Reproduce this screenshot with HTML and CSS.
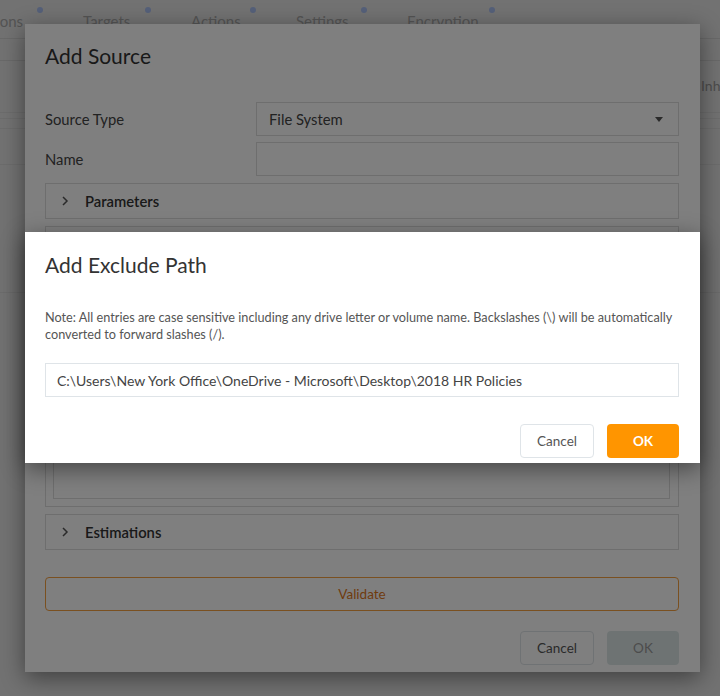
FILE: index.html
```html
<!DOCTYPE html>
<html>
<head>
<meta charset="utf-8">
<link rel="stylesheet" href="styles.css">
</head>
<body>
<div class="page">
  <div class="tabs">
    <div class="tab tab-first"><span>Options</span></div>
    <div class="tab"><span>Targets</span></div>
    <div class="tab"><span>Actions</span></div>
    <div class="tab"><span>Settings</span></div>
    <div class="tab"><span>Encryption</span></div>
  </div>
  <div class="toolbar"></div>
  <div class="row row-head"><span class="inhe">Inherited</span></div>
  <div class="row r1"></div>
  <div class="row r2"></div>
  <div class="row r3"></div>
  <div class="row r4"></div>
</div>

<div class="modal source">
  <h2 class="modal-title">Add Source</h2>
  <div class="form">
    <div class="field">
      <label class="label">Source Type</label>
      <div class="select"><span>File System</span><span class="caret"></span></div>
    </div>
    <div class="field">
      <label class="label">Name</label>
      <div class="input"></div>
    </div>
    <div class="panel">
      <svg class="chev" width="8" height="12" viewBox="0 0 8 12"><polyline points="2,2 6,6 2,10" fill="none" stroke="#555" stroke-width="1.5"/></svg>
      <span class="panel-title">Parameters</span>
    </div>
    <div class="panel panel-open">
      <div class="panel-head">
        <svg class="chev" width="8" height="12" viewBox="0 0 8 12"><polyline points="2,2 6,6 2,10" fill="none" stroke="#555" stroke-width="1.5"/></svg>
        <span class="panel-title">Exclude Paths</span>
      </div>
      <div class="inner-box"></div>
    </div>
    <div class="panel">
      <svg class="chev" width="8" height="12" viewBox="0 0 8 12"><polyline points="2,2 6,6 2,10" fill="none" stroke="#555" stroke-width="1.5"/></svg>
      <span class="panel-title">Estimations</span>
    </div>
    <button class="btn-validate">Validate</button>
  </div>
  <div class="footer">
    <button class="btn btn-cancel">Cancel</button>
    <button class="btn btn-ok btn-disabled">OK</button>
  </div>
</div>

<div class="overlay"></div>

<div class="modal exclude">
  <h2 class="modal-title ex-title">Add Exclude Path</h2>
  <p class="note">Note: All entries are case sensitive including any drive letter or volume name. Backslashes (\) will be automatically converted to forward slashes (/).</p>
  <div class="path-input">C:\Users\New York Office\OneDrive - Microsoft\Desktop\2018 HR Policies</div>
  <div class="footer ex-footer">
    <button class="btn btn-cancel">Cancel</button>
    <button class="btn btn-ok">OK</button>
  </div>
</div>
</body>
</html>
```

FILE: styles.css
```css
* { box-sizing: border-box; }
html, body { margin: 0; padding: 0; }
body {
  width: 720px;
  height: 696px;
  overflow: hidden;
  background: #e4e4e4;
  font-family: "Lato", "Noto Sans", sans-serif;
  color: #333;
  position: relative;
}

/* background page */
.page { width: 720px; overflow: hidden; }
.tabs {
  height: 39px;
  display: grid;
  grid-template-columns: 43px 108px 105px 111px 128px;
  border-bottom: 1px solid #d2d2d2;
}
.tab {
  position: relative;
  font-size: 15px;
  color: #a8a8a8;
  padding-top: 12px;
  padding-left: 40px;
  white-space: nowrap;
}
.tab::after {
  content: "";
  position: absolute;
  right: 0;
  top: 7px;
  width: 6px; height: 6px; border-radius: 50%;
  background: #a9bff2;
}
.tab-first { padding-left: 0; display: flex; justify-content: flex-end; padding-right: 20px; overflow: visible; }
.toolbar { height: 22px; border-bottom: 1px solid #d2d2d2; }
.row-head { height: 52px; border-bottom: 1px solid #d8d8d8; display: flex; align-items: center; padding-left: 701px; }
.inhe { font-size: 14px; color: #999; white-space: nowrap; margin-top: -2px; }
.row { border-bottom: 1px solid #d8d8d8; }
.r1 { height: 6px; }
.r2 { height: 10px; }
.r3 { height: 36px; }
.r4 { height: 128px; }

/* modals */
.modal {
  position: absolute;
  left: 25px;
  width: 675px;
  background: #fff;
  padding: 0 21px 0 20px;
  box-shadow: 0 6px 22px rgba(0,0,0,0.45);
}
.source { top: 24px; height: 648px; }
.modal-title {
  margin: 0;
  font-weight: 400;
  font-size: 21px;
  color: #333;
  height: 78px;
  padding-top: 19px;
  line-height: 26px;
}
.form { display: flex; flex-direction: column; gap: 7px; }
.field { display: flex; align-items: center; height: 34px; }
.field + .field { margin-top: -1px; }
.label { width: 211px; font-size: 14.8px; color: #444; }
.select, .input {
  flex: 1;
  height: 34px;
  border: 1px solid #dcdcdc;
  display: flex;
  align-items: center;
  padding: 0 12px;
  font-size: 14.8px;
  color: #444;
}
.select { justify-content: space-between; }
.caret {
  width: 0; height: 0;
  border-left: 4.5px solid transparent;
  border-right: 4.5px solid transparent;
  border-top: 5px solid #555;
  margin-right: 3px;
}
.panel {
  border: 1px solid #dcdcdc;
  height: 36px;
  display: flex;
  align-items: center;
  padding-left: 15px;
}
.chev { margin-right: 16px; flex: none; }
.panel-title { font-size: 14.8px; font-weight: 600; color: #333; }
.panel-open { height: 281px; display: block; padding: 0 8px 7px 7px; }
.panel-head { height: 36px; display: flex; align-items: center; padding-left: 8px; }
.inner-box { border: 1px solid #dcdcdc; height: 236px; }
.btn-validate {
  margin-top: 20px;
  height: 34px;
  border: 1px solid #f5a040;
  border-radius: 4px;
  background: #fff;
  color: #e0771a;
  font-family: inherit;
  font-size: 13.5px;
}
.footer {
  display: flex;
  justify-content: flex-end;
  gap: 13px;
  margin-top: 20px;
}
.btn {
  height: 34px;
  border-radius: 4px;
  font-family: inherit;
  font-size: 13.5px;
  padding: 0;
}
.btn-cancel { width: 74px; background: #fff; border: 1px solid #dfe4e8; color: #555; }
.btn-ok { width: 72px; background: #ff9500; border: none; color: #fff; font-weight: 700; }
.btn-disabled { background: #dde7e7; color: #999; font-weight: 400; }

.overlay {
  position: absolute;
  inset: 0;
  background: rgba(0,0,0,0.5);
}

.exclude { top: 232px; height: 231px; }
.ex-title { height: 77px; padding-top: 20px; }
.note {
  margin: 0;
  font-size: 12.7px;
  line-height: 17px;
  color: #555;
}
.path-input {
  margin-top: 20px;
  height: 34px;
  border: 1px solid #dfe4e8;
  display: flex;
  align-items: center;
  padding-left: 11px;
  font-size: 14px;
  color: #444;
}
.ex-footer { margin-top: 27px; }
```
